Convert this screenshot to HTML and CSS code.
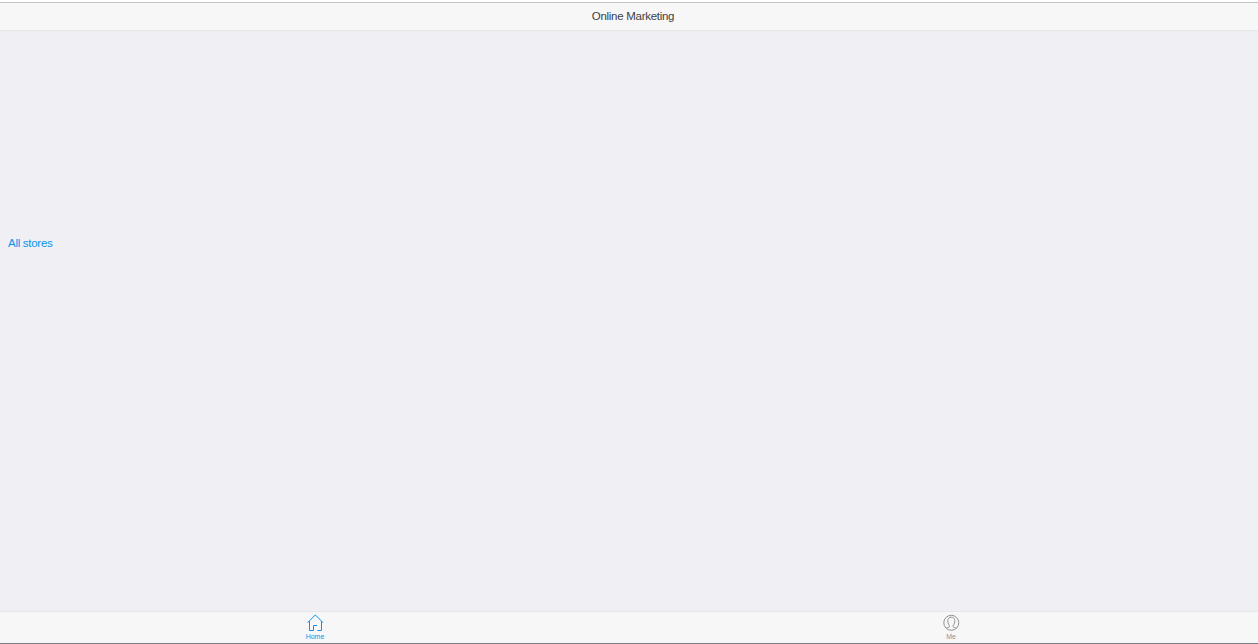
FILE: index.html
```html
<!DOCTYPE html>
<html lang="en">
<head>
    <meta charset="UTF-8">
    <meta name="viewport" content="width=device-width, initial-scale=1.0">
    <title>Online Marketing</title>
    <link rel="stylesheet" href="styles.css">
</head>
<body>

    <header class="navbar">
        <h1 class="title">Online Marketing</h1>
    </header>

    <main class="content">
        <a href="#" class="stores-link">All stores</a>
    </main>

    <!-- Bottom Tabs -->
    <nav class="tabbar">
        <a href="#" class="tab tab-home active">
            <svg class="icon" viewBox="0 0 18 18">
                <path d="M1.600 8.700 9.300.9l7.700 7.800M3.500 7v9.500h4v-5h3.500M15.500 7v9.500h-4"/>
            </svg>
            <span>Home</span>
        </a>
        <a href="#" class="tab">
            <svg class="icon" viewBox="0 0 18 18">
                <circle cx="9.300" cy="8.800" r="7.500"/>
                <path d="M4.300 14.200c1-.6 2.600-.7 3.100-1.400.4-.8-.2-1.600-.8-2.600C5.100 7.200 5.600 3.200 9.300 3.200s4.200 4 2.700 7c-.6 1-1.200 1.800-.8 2.600.5.700 2.100.8 3.100 1.400"/>
            </svg>
            <span>Me</span>
        </a>
    </nav>

</body>
</html>
```

FILE: styles.css
```css
* {
    box-sizing: border-box;
}

body {
    margin: 0;
    height: 100vh;
    display: flex;
    flex-direction: column;
    font-family: "Liberation Sans", Arial, sans-serif;
    background: #efeff4;
    border-top: 2px solid #ffffff;
    border-bottom: 1px solid #7c7c84;
}

/* Header */
.navbar {
    height: 29px;
    padding: 0 0 1px 8px;
    display: flex;
    align-items: center;
    justify-content: center;
    background: #f7f7f8;
    border-top: 1px solid #c4c4c4;
    border-bottom: 1px solid #e7e7ea;
}

.title {
    margin: 0;
    font-size: 11.5px;
    line-height: 14px;
    letter-spacing: -0.28px;
    font-weight: normal;
    color: #3d4145;
}

/* Main Content */
.content {
    flex: 1;
    padding: 205px 8px 0;
}

.stores-link {
    display: block;
    font-size: 11.5px;
    line-height: 14px;
    letter-spacing: -0.28px;
    color: #0894ec;
    text-decoration: none;
}

/* Bottom Tabs */
.tabbar {
    height: 32px;
    display: flex;
    gap: 14px;
    background: #f7f7f8;
    border-top: 1px solid #e7e7ea;
}

.tab {
    flex: 1;
    padding-top: 2px;
    display: flex;
    flex-direction: column;
    align-items: center;
    font-size: 7px;
    line-height: 10px;
    color: #929292;
    text-decoration: none;
}

.tab-home {
    flex: 0 0 630px;
}

.tab.active {
    color: #0894ec;
}

.icon {
    width: 18px;
    height: 18px;
    fill: none;
    stroke: currentColor;
    stroke-width: 1;
}
```
